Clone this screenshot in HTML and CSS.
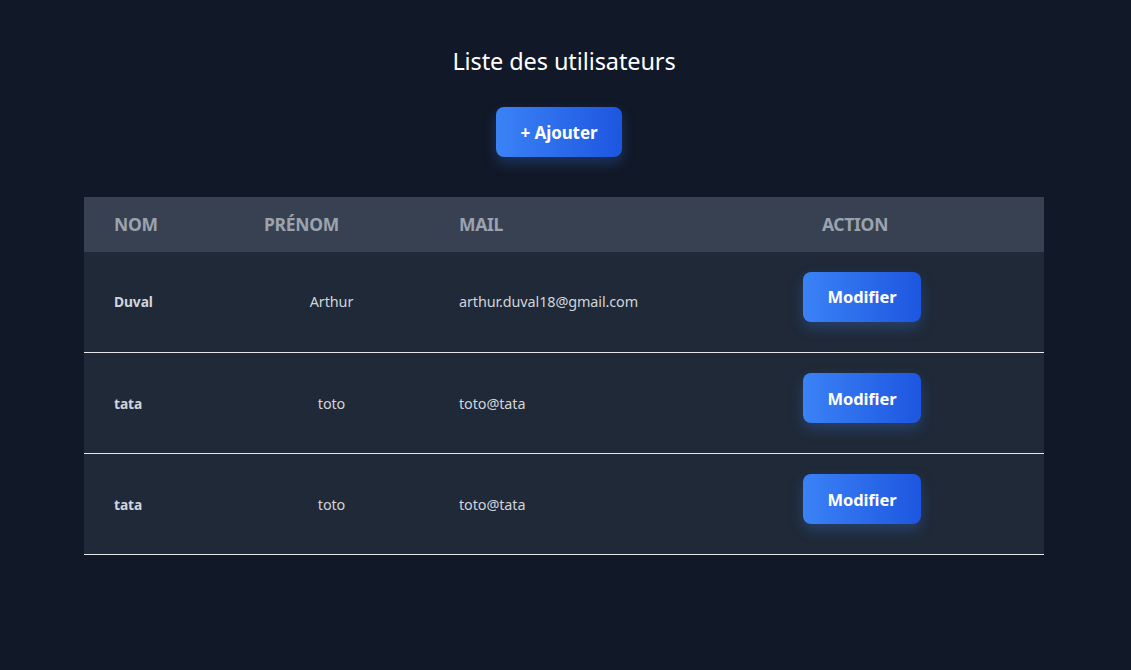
FILE: index.html
```html
<!DOCTYPE html>
<html lang="fr">
<head>
<meta charset="utf-8">
<title>Liste des utilisateurs</title>
<link rel="stylesheet" href="styles.css">
</head>
<body>
<main class="page">
  <h1 class="title">Liste des utilisateurs</h1>
  <button class="btn btn-add">+ Ajouter</button>
  <table class="users">
    <colgroup>
      <col class="c-nom"><col class="c-prenom"><col class="c-mail"><col class="c-action">
    </colgroup>
    <thead>
      <tr>
        <th class="h-left">Nom</th>
        <th class="h-left">Prénom</th>
        <th class="h-left">Mail</th>
        <th class="h-center">Action</th>
      </tr>
    </thead>
    <tbody>
      <tr>
        <td class="name">Duval</td>
        <td class="center">Arthur</td>
        <td>arthur.duval18@gmail.com</td>
        <td class="action"><button class="btn btn-edit">Modifier</button></td>
      </tr>
      <tr>
        <td class="name">tata</td>
        <td class="center">toto</td>
        <td>toto@tata</td>
        <td class="action"><button class="btn btn-edit">Modifier</button></td>
      </tr>
      <tr>
        <td class="name">tata</td>
        <td class="center">toto</td>
        <td>toto@tata</td>
        <td class="action"><button class="btn btn-edit">Modifier</button></td>
      </tr>
    </tbody>
  </table>
</main>
</body>
</html>
```

FILE: styles.css
```css
html, body {
  margin: 0;
  padding: 0;
  background: #111827;
  font-family: "Noto Sans", "Open Sans", "DejaVu Sans", sans-serif;
}

.page {
  display: flex;
  flex-direction: column;
  align-items: center;
  padding-top: 44px;
  padding-right: 3px;
}

.title {
  margin: 0;
  font-size: 23.5px;
  font-weight: 400;
  color: #ffffff;
  line-height: 34px;
  letter-spacing: -0.1px;
}

.btn {
  border: none;
  border-radius: 8px;
  color: #ffffff;
  font-family: inherit;
  font-weight: 700;
  font-size: 16.5px;
  background: linear-gradient(90deg, #3b82f6 0%, #1d56e0 100%);
  box-shadow: 0 6px 14px rgba(59, 130, 246, 0.28);
  cursor: pointer;
  letter-spacing: -0.1px;
}

.btn-add {
  margin-top: 29px;
  margin-right: 10px;
  width: 126px;
  height: 50px;
  font-size: 17px;
}

.users {
  margin-top: 40px;
  width: 960px;
  border-collapse: collapse;
  table-layout: fixed;
}

.c-nom { width: 150px; }
.c-prenom { width: 195px; }
.c-mail { width: 237px; }
.c-action { width: 378px; }

.users thead tr {
  background: #374151;
  height: 54.5px;
}

.users th {
  color: #9ca3af;
  font-size: 17.5px;
  font-weight: 700;
  text-transform: uppercase;
  padding: 0 30px;
  letter-spacing: -0.3px;
}

.h-left { text-align: left; }
.h-center { text-align: center; }

.users tbody tr {
  background: #1f2937;
  height: 101px;
  border-bottom: 1px solid #e5e7eb;
}

.users td {
  color: #d1d5db;
  font-size: 14.4px;
  padding: 0 30px;
  vertical-align: middle;
  letter-spacing: -0.1px;
}

.users td.name {
  font-weight: 700;
  font-size: 13.8px;
}

.users td.center {
  text-align: center;
}

.users td.action {
  padding: 0 0 10px 137px;
}

.btn-edit {
  width: 118px;
  height: 50px;
}
```
